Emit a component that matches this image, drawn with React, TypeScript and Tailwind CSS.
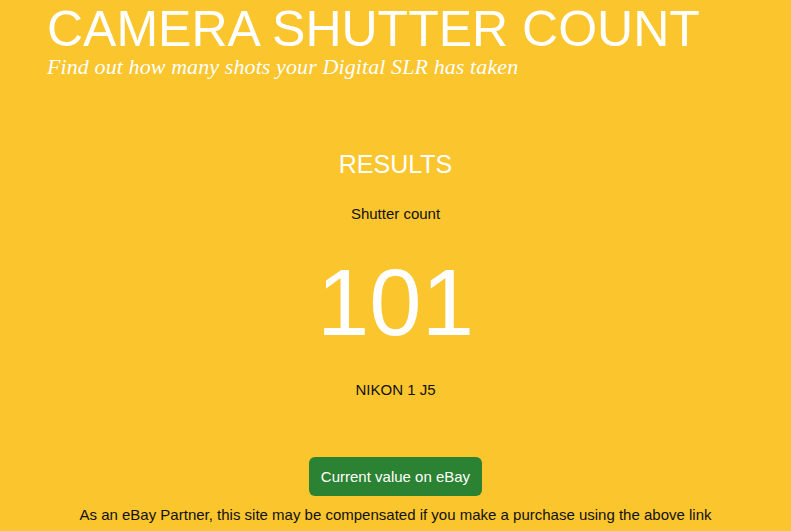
export default function App() {
  return (
    <div className="min-h-[531px] w-full bg-[#fbc52e] overflow-hidden" style={{ fontFamily: '"Liberation Sans", Arial, sans-serif' }}>
      <header className="pl-[47px] pt-[2px]">
        <h1 className="text-[50px] leading-[54px] text-white">CAMERA SHUTTER COUNT</h1>
        <p className="text-[22px] leading-[22px] italic text-white tracking-[0.1px]" style={{ fontFamily: '"Liberation Serif", Georgia, serif' }}>
          Find out how many shots your Digital SLR has taken
        </p>
      </header>
      <main className="flex flex-col items-center mt-[72px]">
        <h2 className="text-[25px] leading-[28px] text-white">RESULTS</h2>
        <p className="mt-[27px] text-[15px] leading-[18px] text-[#111]">Shutter count</p>
        <p className="mt-[26px] text-[94px] leading-[108px] text-white">101</p>
        <p className="mt-[24px] text-[15px] leading-[18px] text-[#111]">NIKON 1 J5</p>
        <a className="mt-[58px] rounded-[6px] bg-[#2b8232] text-white text-[15px] leading-[19px] px-[12px] py-[10px]">Current value on eBay</a>
        <p className="mt-[10px] text-[15px] leading-[18px] text-[#111]">As an eBay Partner, this site may be compensated if you make a purchase using the above link</p>
      </main>
    </div>
  );
}
